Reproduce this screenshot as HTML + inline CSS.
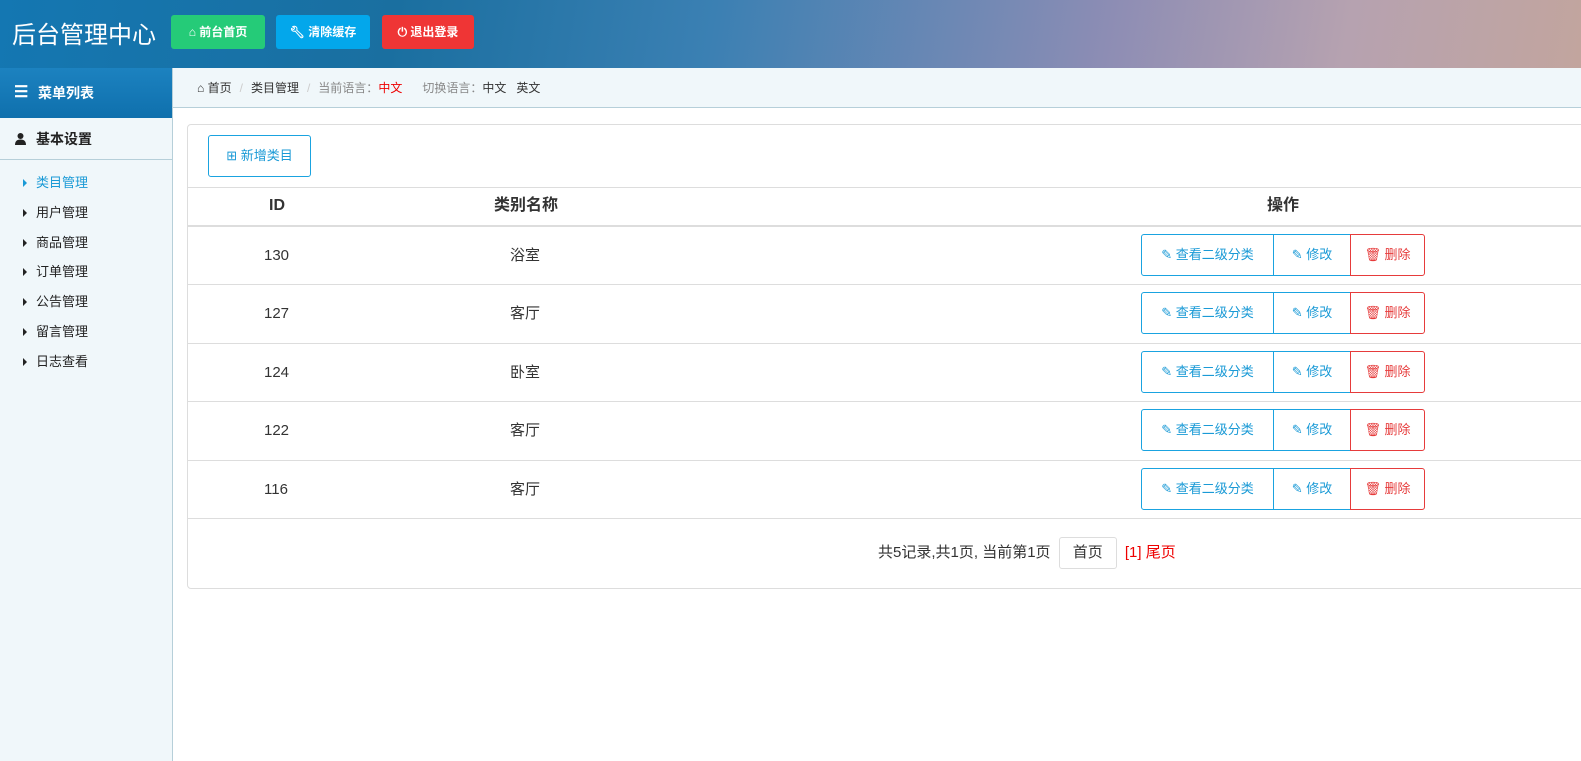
<!DOCTYPE html>
<html><head><meta charset="utf-8"><style>
*{margin:0;padding:0;box-sizing:border-box}
body{width:1581px;height:761px;overflow:hidden;background:#fff;font-family:"Liberation Sans","Noto Sans CJK SC",sans-serif;font-size:13px;color:#333;position:relative}
.hdr{position:absolute;left:0;top:0;width:1581px;height:68px;background:linear-gradient(100deg,#1477b2 0%,#1a6fa0 25%,#3b80b3 45%,#8d8db4 70%,#b6a2b0 85%,#c2a59e 100%)}
.title{position:absolute;left:12px;top:15px;color:#fff;font-size:24px}
.hb{position:absolute;top:15px;height:34px;border-radius:3px;color:#fff;font-size:12px;font-weight:bold;line-height:34px;text-align:center}
.side{position:absolute;left:0;top:68px;width:173px;height:693px;background:#f0f7fa;border-right:1px solid #b6cfd9}
.mh{height:50px;background:linear-gradient(#1c82c0,#0f70ad);color:#fff;font-weight:bold;font-size:14px;line-height:50px;padding-left:38px;position:relative}
.sec{height:42px;border-bottom:1px solid #b6cfd9;font-weight:bold;font-size:14px;line-height:42px;padding-left:36px;position:relative;color:#222}
.item{height:29.8px;line-height:30px;padding-left:36px;position:relative;color:#222}
.item:before{content:"";position:absolute;left:23px;top:11px;border-left:4px solid #222;border-top:4px solid transparent;border-bottom:4px solid transparent}
.item.a{color:#1a9ad6}.item.a:before{border-left-color:#1a9ad6}
.bc{position:absolute;left:173px;top:68px;width:1408px;height:40px;background:#f0f7fa;border-bottom:1px solid #b6cfd9;font-size:12px;line-height:41px;padding-left:24px;color:#333}
.bc .g{color:#888}.bc .s{color:#ccc;margin:0 8px}
.card{position:absolute;left:187px;top:124px;width:1400px;height:465px;border:1px solid #ddd;border-radius:4px}
.add{position:absolute;left:20px;top:10px;width:103px;height:42px;border:1px solid #1aa3e0;border-radius:3px;color:#1a9ad6;line-height:40px;text-align:center}
.line{position:absolute;left:0;width:1400px;border-top:1px solid #ddd}
.th{position:absolute;top:62px;height:38px;line-height:38px;font-weight:bold;font-size:16px;color:#333}
.td{position:absolute;font-size:15px;color:#333;height:58px;line-height:60px}
.bg{position:absolute;left:953px;height:42px;width:284px}
.b{position:absolute;top:0;height:42px;border:1px solid #1aa3e0;color:#1a9ad6;line-height:40px;text-align:center;font-size:13px}
.pg{position:absolute;top:412px;left:690px;font-size:15px;color:#333;line-height:32px}
</style></head><body>
<div class="hdr">
<div class="title">后台管理中心</div>
<div class="hb" style="left:171px;width:94px;background:#25cb78">⌂ 前台首页</div>
<div class="hb" style="left:276px;width:94px;background:#03a7eb">🔧︎ 清除缓存</div>
<div class="hb" style="left:382px;width:92px;background:#ef3535">⏻ 退出登录</div>
</div>
<div class="side">
<div class="mh"><span style="position:absolute;left:14px;top:0;font-size:16px">☰</span>菜单列表</div>
<div class="sec"><svg style="position:absolute;left:15px;top:15px" width="11" height="12" viewBox="0 0 11 12"><circle cx="5.5" cy="3" r="3" fill="#222"/><path d="M0 12 Q0 6.5 5.5 6.5 Q11 6.5 11 12Z" fill="#222"/></svg>基本设置</div>
<div style="height:8px"></div>
<div class="item a">类目管理</div><div class="item">用户管理</div><div class="item">商品管理</div><div class="item">订单管理</div><div class="item">公告管理</div><div class="item">留言管理</div><div class="item">日志查看</div>
</div>
<div class="bc">⌂ 首页<span class="s">/</span>类目管理<span class="s">/</span><span class="g">当前语言：</span><span style="color:#e00">中文</span>&nbsp;&nbsp;&nbsp;&nbsp;&nbsp;&nbsp;<span class="g">切换语言：</span>中文&nbsp;&nbsp;&nbsp;英文</div>
<div class="card">
<div class="add">⊞ 新增类目</div>
<div class="line" style="top:62px"></div>
<div class="th" style="left:81px">ID</div><div class="th" style="left:306px">类别名称</div><div class="th" style="left:1079px">操作</div>
<div class="line" style="top:100px;border-top:2px solid #ddd"></div>
<div class="td" style="left:76px;top:101px">130</div><div class="td" style="left:322px;top:101px">浴室</div>
<div class="bg" style="top:109px"><div class="b" style="left:0;width:133px;border-radius:3px 0 0 3px">✎ 查看二级分类</div><div class="b" style="left:132px;width:78px">✎ 修改</div><div class="b" style="left:209px;width:75px;border-color:#e63b3b;color:#e63b3b;border-radius:0 3px 3px 0">🗑︎ 删除</div></div>
<div class="line" style="top:159px"></div>
<div class="td" style="left:76px;top:159px">127</div><div class="td" style="left:322px;top:159px">客厅</div>
<div class="bg" style="top:167px"><div class="b" style="left:0;width:133px;border-radius:3px 0 0 3px">✎ 查看二级分类</div><div class="b" style="left:132px;width:78px">✎ 修改</div><div class="b" style="left:209px;width:75px;border-color:#e63b3b;color:#e63b3b;border-radius:0 3px 3px 0">🗑︎ 删除</div></div>
<div class="line" style="top:218px"></div>
<div class="td" style="left:76px;top:218px">124</div><div class="td" style="left:322px;top:218px">卧室</div>
<div class="bg" style="top:226px"><div class="b" style="left:0;width:133px;border-radius:3px 0 0 3px">✎ 查看二级分类</div><div class="b" style="left:132px;width:78px">✎ 修改</div><div class="b" style="left:209px;width:75px;border-color:#e63b3b;color:#e63b3b;border-radius:0 3px 3px 0">🗑︎ 删除</div></div>
<div class="line" style="top:276px"></div>
<div class="td" style="left:76px;top:276px">122</div><div class="td" style="left:322px;top:276px">客厅</div>
<div class="bg" style="top:284px"><div class="b" style="left:0;width:133px;border-radius:3px 0 0 3px">✎ 查看二级分类</div><div class="b" style="left:132px;width:78px">✎ 修改</div><div class="b" style="left:209px;width:75px;border-color:#e63b3b;color:#e63b3b;border-radius:0 3px 3px 0">🗑︎ 删除</div></div>
<div class="line" style="top:335px"></div>
<div class="td" style="left:76px;top:335px">116</div><div class="td" style="left:322px;top:335px">客厅</div>
<div class="bg" style="top:343px"><div class="b" style="left:0;width:133px;border-radius:3px 0 0 3px">✎ 查看二级分类</div><div class="b" style="left:132px;width:78px">✎ 修改</div><div class="b" style="left:209px;width:75px;border-color:#e63b3b;color:#e63b3b;border-radius:0 3px 3px 0">🗑︎ 删除</div></div>
<div class="line" style="top:393px"></div>
<div class="pg">共5记录,共1页, 当前第1页 <span style="display:inline-block;border:1px solid #ddd;border-radius:3px;padding:0 13px;line-height:30px;margin:0 4px">首页</span> <span style="color:#e00">[1] 尾页</span></div>
</div>
</body></html>
